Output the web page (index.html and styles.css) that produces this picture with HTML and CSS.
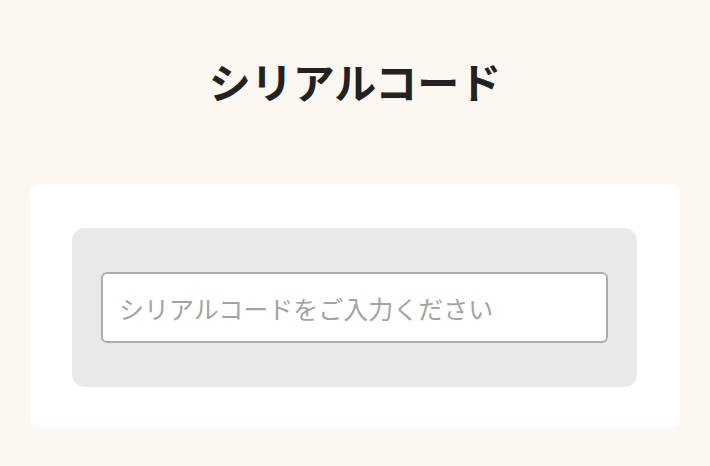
FILE: index.html
```html
<!DOCTYPE html>
<html lang="ja">
<head>
  <meta charset="UTF-8">
  <meta name="viewport" content="width=device-width, initial-scale=1.0">
  <title>シリアルコード</title>
  <link rel="stylesheet" href="styles.css">
</head>
<body>
<div class="page">
  <h1 class="titulo">シリアルコード</h1>

  <div class="cartao">
    <div class="caixa">
      <input class="campo" type="text" placeholder="シリアルコードをご入力ください">
    </div>
  </div>
</div>
</body>
</html>
```

FILE: styles.css
```css
body {
  margin: 0;
  background: #fcf7f1;
  color: #222;
  font-family: "Noto Sans CJK JP", "Noto Sans", sans-serif;
  min-height: 100vh;
}

.page {
  padding: 49px 30px 0;
}

.titulo {
  margin: 0;
  font-size: 42px;
  line-height: 64px;
  font-weight: 700;
  text-align: center;
  color: #222;
}

.cartao {
  margin-top: 71px;
  background: #fff;
  border-radius: 10px;
  padding: 44px 43px 41px 42px;
}

.caixa {
  background: #e9e9e9;
  border-radius: 13px;
  padding: 44px 29px;
}

.campo {
  display: block;
  box-sizing: border-box;
  width: 100%;
  height: 71px;
  margin: 0;
  padding: 0 16px;
  border: 2px solid #ababab;
  border-radius: 6px;
  background: #fff;
  font-family: "Noto Sans CJK JP", "Noto Sans", sans-serif;
  font-size: 25px;
  color: #222;
  outline: none;
}

.campo::placeholder {
  color: #a3a3a3;
}
```
